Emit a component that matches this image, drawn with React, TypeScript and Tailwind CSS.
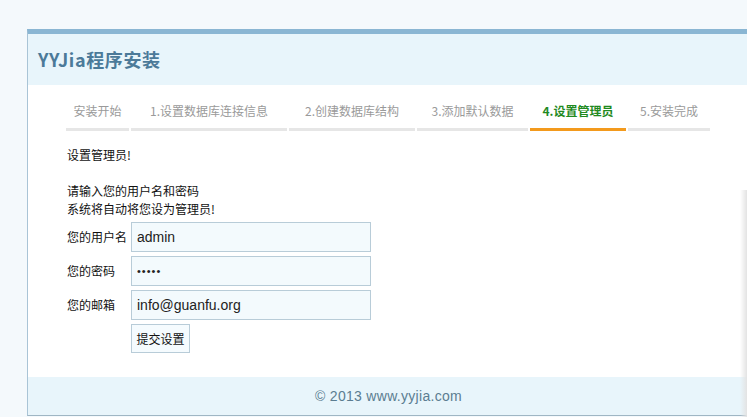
import React from 'react';

const tabs = [
  { name: '安装开始', width: 'w-[63px]' },
  { name: '1.设置数据库连接信息', width: 'w-[156px]' },
  { name: '2.创建数据库结构', width: 'w-[126px]' },
  { name: '3.添加默认数据', width: 'w-[111px]' },
  { name: '4.设置管理员', width: 'w-[96px]', active: true },
  { name: '5.安装完成', width: 'w-[82px]' },
];

const fields = [
  { label: '您的用户名', value: 'admin', type: 'text' },
  { label: '您的密码', value: 'admin', type: 'password' },
  { label: '您的邮箱', value: 'info@guanfu.org', type: 'text' },
];

export default function App() {
  return (
    <div className="relative h-[417px] w-[747px] overflow-hidden bg-[#f4f9fc] pt-[29px] pl-[27px] font-['Noto_Sans_CJK_SC',sans-serif] text-[12px] text-[#111]">
      <div className="w-[740px] border-t-[5px] border-l border-b border-t-[#8ab6d3] border-l-[#a9c4d6] border-b-[#9fb6c4] bg-white">
        {/* Header */}
        <div className="flex h-[51px] items-center bg-[#e8f5fb] pl-[10px]">
          <h1 className="text-[18px] font-bold tracking-[0.6px] text-[#4b7a99] font-['Noto_Sans_CJK_SC',sans-serif]">
            YYJia程序安装
          </h1>
        </div>

        <div className="pl-[39px]">
          {/* Steps */}
          <nav className="-ml-px mt-[11px] flex gap-[2px]">
            {tabs.map((tab) => (
              <div
                key={tab.name}
                className={`${tab.width} ${
                  tab.active
                    ? 'border-[#f39a1d] font-bold text-[#1f8a1f]'
                    : 'border-[#e6e6e6] text-[#9a9a9a]'
                } h-[35px] whitespace-nowrap border-b-[3px] pb-[2px] text-center leading-[30px]`}
              >
                {tab.name}
              </div>
            ))}
          </nav>

          {/* Body */}
          <div className="mt-[15px] leading-[18px]">
            <p>设置管理员!</p>
            <p className="mt-[18px]">请输入您的用户名和密码</p>
            <p>系统将自动将您设为管理员!</p>
          </div>

          <div className="mt-[4px] flex flex-col gap-[4px]">
            {fields.map((f) => (
              <div key={f.label} className="flex items-center">
                <label className="w-[64px] shrink-0">{f.label}</label>
                <input
                  type={f.type}
                  readOnly
                  value={f.value}
                  className={`h-[30px] w-[240px] border border-[#b8ccd8] bg-[#f3fafd] px-[5px] font-['Liberation_Sans',sans-serif] ${
                    f.type === 'password' ? 'text-[11px] tracking-[1px]' : 'text-[14px]'
                  } text-[#222] outline-none`}
                />
              </div>
            ))}
            <div className="flex">
              <div className="w-[64px] shrink-0" />
              <button className="h-[29px] w-[59px] border border-[#b8ccd8] bg-[#f5fbfe] text-[12px] text-[#111]">
                提交设置
              </button>
            </div>
          </div>
        </div>

        {/* Footer */}
        <div className="mt-[24px] flex h-[38px] items-center bg-[#e8f5fb] pl-[287px] pt-px font-['Liberation_Sans',sans-serif] text-[14px] tracking-[0.3px] text-[#5b7d91]">
          © 2013 www.yyjia.com
        </div>
      </div>

      {/* right edge shadow */}
      <div className="absolute right-0 top-[190px] bottom-0 w-[7px] bg-gradient-to-l from-[#e3e3e3] to-transparent" />
    </div>
  );
}
